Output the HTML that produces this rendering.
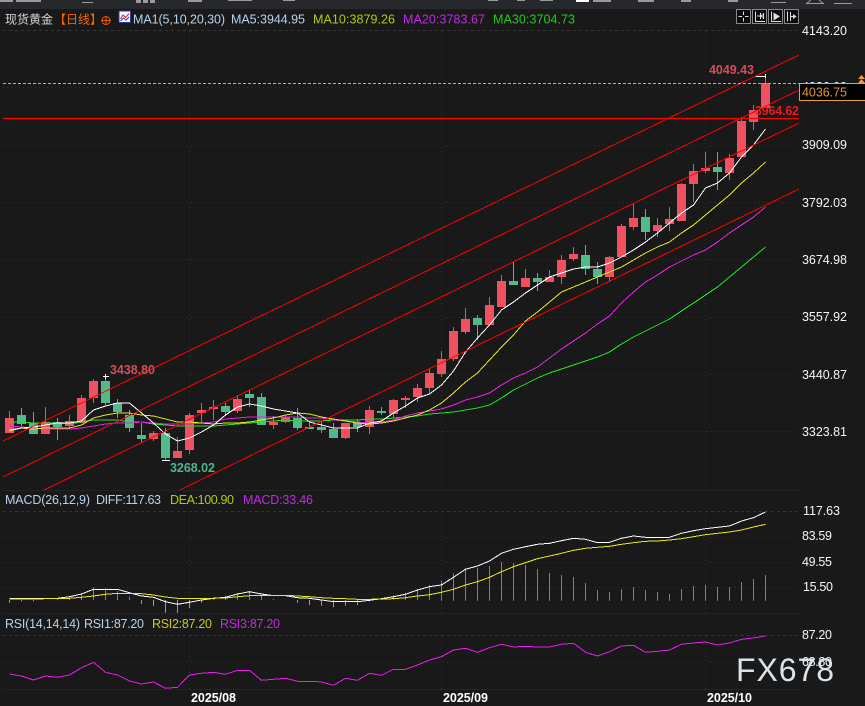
<!DOCTYPE html>
<html lang="zh">
<head>
<meta charset="utf-8">
<title>现货黄金</title>
<style>
html,body{margin:0;padding:0;background:#191919;width:865px;height:706px;overflow:hidden}
svg{display:block;font-family:"Liberation Sans","Noto Sans CJK SC",sans-serif}
text{font-size:12.5px}
.ax{fill:#f2f6fb}
.b{font-weight:bold}
</style>
</head>
<body>
<svg width="865" height="706" viewBox="0 0 865 706" xmlns="http://www.w3.org/2000/svg">
<rect width="865" height="706" fill="#191919"/>

<!-- top strip -->
<rect width="865" height="9" fill="#26282c"/>
<g fill="#9a9a9a">
<rect x="0" y="0" width="13" height="2"/><rect x="16" y="0" width="25" height="2"/>
<rect x="136" y="0" width="5" height="3"/><rect x="143" y="0" width="5" height="3"/><rect x="150" y="0" width="5" height="3"/>
<rect x="82" y="2" width="11" height="1"/><rect x="188" y="0" width="14" height="2"/><rect x="228" y="0" width="24" height="1"/><rect x="283" y="0" width="12" height="1"/>
<rect x="488" y="0" width="10" height="1"/><rect x="517" y="0" width="8" height="1"/><rect x="540" y="0" width="13" height="1"/>
<rect x="593" y="0" width="18" height="2"/><rect x="638" y="0" width="16" height="2"/><rect x="681" y="0" width="10" height="2"/><rect x="728" y="0" width="10" height="2"/>
<rect x="771" y="2" width="15" height="1"/><rect x="806" y="3" width="18" height="1"/>
<rect x="834" y="3" width="18" height="1"/>
</g>
<rect x="576" y="0" width="13" height="2" fill="#fff"/>
<path d="M806 4L811 0M824 4L819 0" stroke="#9a9a9a" fill="none"/>

<!-- grid -->
<g stroke="#363636" stroke-dasharray="3 3" fill="none">
<path d="M3 30.5H799M3 511.5H799M3 635.5H799"/>
</g>
<g stroke="#303030" stroke-dasharray="1 3" fill="none">
<path d="M3 87.5H799M3 145.5H799M3 202.5H799M3 259.5H799M3 317.5H799M3 374.5H799M3 431.5H799"/>
<path d="M3 537.5H799M3 562.5H799M3 587.5H799M3 662.5H799"/>
<path d="M189.5 31V490M441.5 31V490M705.5 31V490M189.5 512V613M441.5 512V613M705.5 512V613M189.5 636V689M441.5 636V689M705.5 636V689"/>
</g>
<path d="M3 490.5H799M3 613.5H799M3 689.5H799" stroke="#242424" fill="none"/>

<!-- candle wicks -->
<path stroke="#f0505f" fill="none" d="M9.5 411V433M45.5 407V434M69.5 415V428M81.5 395V423M93.5 379V403M153.5 431V441M177.5 437V458M189.5 413V454M201.5 403V423M213.5 400V420M237.5 395V413M273.5 416V429M285.5 415V423M345.5 423V439M369.5 406V434M393.5 399V418M405.5 396V408M417.5 384V402M429.5 369V393M441.5 351V377M453.5 327V361M465.5 308V334M489.5 297V325M501.5 275V307M525.5 269V287M549.5 270V282M561.5 255V284M573.5 247V261M609.5 256V282M621.5 224V257M633.5 204V230M657.5 218V237M669.5 207V231M681.5 183V221M693.5 164V202M705.5 152V173M729.5 154V180M741.5 117V157M753.5 105V130M765.5 77V108"/>
<path stroke="#52b98b" fill="none" d="M21.5 408V426M33.5 412V434M57.5 418V440M105.5 376V405M117.5 399V418M129.5 410V432M141.5 423V443M165.5 428V460M225.5 403V416M249.5 390V407M261.5 393V425M297.5 408V430M309.5 423V429M321.5 421V433M333.5 423V438M357.5 419V432M381.5 407V415M477.5 315V340M513.5 262V285M537.5 273V291M585.5 245V275M597.5 262V284M645.5 209V240M717.5 152V190"/>
<!-- candle bodies -->
<path fill="#f0505f" d="M5 418h9v15h-9zM41 422h9v12h-9zM65 421h9v5h-9zM77 398h9v25h-9zM89 381h9v17h-9zM149 433h9v6h-9zM173 451h9v7h-9zM185 415h9v35h-9zM197 410h9v3h-9zM209 407h9v2h-9zM233 399h9v12h-9zM269 422h9v3h-9zM281 417h9v5h-9zM341 423h9v15h-9zM365 410h9v17h-9zM389 400h9v14h-9zM401 398h9v2h-9zM413 388h9v9h-9zM425 373h9v15h-9zM437 359h9v15h-9zM449 331h9v28h-9zM461 319h9v13h-9zM485 305h9v20h-9zM497 281h9v26h-9zM521 278h9v9h-9zM545 277h9v5h-9zM557 260h9v17h-9zM569 254h9v5h-9zM605 257h9v20h-9zM617 226h9v31h-9zM629 218h9v9h-9zM653 225h9v6h-9zM665 219h9v5h-9zM677 184h9v37h-9zM689 171h9v13h-9zM701 168h9v3h-9zM725 158h9v15h-9zM737 121h9v36h-9zM749 110h9v12h-9zM761 83h9v25h-9z"/>
<path fill="#52b98b" d="M17 415h9v9h-9zM29 423h9v11h-9zM53 422h9v5h-9zM101 381h9v22h-9zM113 403h9v9h-9zM125 415h9v13h-9zM137 435h9v4h-9zM161 433h9v25h-9zM221 406h9v6h-9zM245 394h9v4h-9zM257 397h9v28h-9zM293 418h9v10h-9zM305 427h9v2h-9zM317 427h9v3h-9zM329 429h9v9h-9zM353 423h9v4h-9zM377 411h9v2h-9zM473 318h9v7h-9zM509 281h9v4h-9zM533 278h9v4h-9zM581 255h9v14h-9zM593 269h9v8h-9zM641 217h9v15h-9zM713 167h9v5h-9z"/>

<!-- high/low marks -->
<path stroke="#fff" fill="none" d="M103 376.5H109M105.5 374V379M162 460.5H170M755 76.5H766M765.5 74V78"/>

<!-- moving averages -->
<g fill="none" stroke-width="1" shape-rendering="crispEdges">
<polyline stroke="#22e022" points="9.5,422 21.5,422 33.5,423 45.5,423 57.5,423 69.5,424 81.5,422 93.5,420 105.5,420 117.5,420 129.5,422 141.5,422 153.5,424 165.5,425 177.5,426 189.5,426 201.5,426 213.5,426 225.5,425 237.5,424 249.5,423 261.5,422 273.5,421 285.5,420 297.5,421 309.5,421 321.5,421 333.5,420 345.5,420 357.5,420 369.5,419 381.5,419 393.5,418 405.5,417 417.5,416 429.5,414 441.5,413 453.5,412 465.5,410 477.5,408 489.5,405 501.5,398 513.5,390 525.5,384 537.5,378 549.5,373 561.5,369 573.5,365 585.5,361 597.5,357 609.5,352 621.5,344 633.5,337 645.5,331 657.5,325 669.5,319 681.5,311 693.5,303 705.5,295 717.5,287 729.5,277 741.5,267 753.5,257 765.5,247"/>
<polyline stroke="#e81fe8" points="9.5,426 21.5,427 33.5,428 45.5,429 57.5,429 69.5,429 81.5,428 93.5,426 105.5,424 117.5,423 129.5,423 141.5,422 153.5,423 165.5,424 177.5,424 189.5,424 201.5,423 213.5,422 225.5,419 237.5,418 249.5,417 261.5,417 273.5,417 285.5,417 297.5,417 309.5,418 321.5,418 333.5,420 345.5,421 357.5,422 369.5,423 381.5,422 393.5,420 405.5,416 417.5,413 429.5,411 441.5,409 453.5,405 465.5,400 477.5,397 489.5,393 501.5,385 513.5,378 525.5,373 537.5,367 549.5,358 561.5,349 573.5,341 585.5,333 597.5,324 609.5,316 621.5,303 633.5,292 645.5,282 657.5,275 669.5,267 681.5,261 693.5,255 705.5,250 717.5,242 729.5,233 741.5,225 753.5,217 765.5,207"/>
<polyline stroke="#e8e820" points="9.5,431 21.5,428 33.5,429 45.5,428 57.5,428 69.5,428 81.5,425 93.5,418 105.5,415 117.5,413 129.5,413 141.5,415 153.5,416 165.5,419 177.5,422 189.5,422 201.5,423 213.5,424 225.5,423 237.5,423 249.5,422 261.5,420 273.5,418 285.5,415 297.5,413 309.5,414 321.5,417 333.5,419 345.5,421 357.5,423 369.5,424 381.5,423 393.5,421 405.5,418 417.5,415 429.5,410 441.5,403 453.5,393 465.5,382 477.5,373 489.5,360 501.5,347 513.5,335 525.5,321 537.5,312 549.5,302 561.5,292 573.5,287 585.5,282 597.5,277 609.5,272 621.5,267 633.5,260 645.5,253 657.5,247 669.5,242 681.5,233 693.5,225 705.5,215 717.5,205 729.5,195 741.5,183 753.5,173 765.5,162"/>
<polyline stroke="#ffffff" points="9.5,430 21.5,428 33.5,427 45.5,425 57.5,423 69.5,423 81.5,421 93.5,410 105.5,406 117.5,403 129.5,403 141.5,413 153.5,423 165.5,434 177.5,441 189.5,438 201.5,432 213.5,425 225.5,415 237.5,407 249.5,404 261.5,406 273.5,409 285.5,411 297.5,413 309.5,422 321.5,425 333.5,428 345.5,428 357.5,428 369.5,423 381.5,421 393.5,413 405.5,406 417.5,398 429.5,394 441.5,385 453.5,371 465.5,352 477.5,338 489.5,325 501.5,310 513.5,302 525.5,293 537.5,285 549.5,277 561.5,273 573.5,269 585.5,267 597.5,267 609.5,263 621.5,257 633.5,250 645.5,242 657.5,233 669.5,223 681.5,213 693.5,205 705.5,188 717.5,183 729.5,173 741.5,157 753.5,145 765.5,129"/>
</g>

<!-- channel + horizontal lines -->
<defs><clipPath id="c"><rect x="3" y="31" width="796" height="459"/></clipPath></defs>
<g clip-path="url(#c)" fill="none" stroke="#ff0000" stroke-width="1" shape-rendering="crispEdges">
<path d="M3 441L799 55"/>
<path d="M3 477L799 90"/>
<path d="M3 510L799 123"/>
<path d="M3 576L799 189"/>
</g>
<path d="M3 118.5H799" stroke="#ff0000" stroke-width="1.3" fill="none"/>
<path d="M3 83.5H799" stroke="#e8a64a" stroke-dasharray="3 2" fill="none"/>

<!-- extreme labels -->
<text class="b" x="709" y="74" fill="#d9485a" textLength="45">4049.43</text>
<text class="b" x="755" y="115" fill="#f01818" textLength="44">3964.62</text>
<text class="b" x="110" y="374" fill="#d9485a" textLength="45">3438.80</text>
<text class="b" x="170" y="472" fill="#4fb58a" textLength="45">3268.02</text>

<!-- MACD histogram -->
<path stroke="#6fb59a" fill="none" d="M9.5 600V602.7M21.5 600V601.3M33.5 600V601.3M141.5 600V604M153.5 600V606M165.5 600V612.7M177.5 600V612.7M189.5 600V608M201.5 600V602.7M297.5 600V602.7M309.5 600V605M321.5 600V605.7M333.5 600V607.3M345.5 600V605.7M357.5 600V605M369.5 600V601.3"/>
<path stroke="#f0505f" fill="none" d="M57.5 600V598.7M69.5 600V597.3M81.5 600V593.3M93.5 600V587.3M105.5 600V588M117.5 600V591.3M129.5 600V596.7M213.5 600V597.3M225.5 600V596M237.5 600V593.3M249.5 600V591.3M261.5 600V595.3M273.5 600V599M285.5 600V599.7M381.5 600V599.3M393.5 600V595.3M405.5 600V592.7M417.5 600V589.3M429.5 600V585M441.5 600.7V580.7M453.5 600.7V573.3M465.5 600.7V568.3M477.5 600.7V567.7M489.5 600.7V566M501.5 600.7V562M513.5 600.7V563M525.5 600.7V565M537.5 600.7V569M549.5 600.7V573M561.5 600.7V575M573.5 600.7V577M585.5 600.7V583M597.5 600.7V590M609.5 600.7V592M621.5 600.7V589M633.5 600.7V587M645.5 600.7V590M657.5 600.7V592M669.5 600.7V594M681.5 600.7V589M693.5 600.7V586M705.5 600.7V585M717.5 600.7V587M729.5 600.7V587M741.5 600.7V582M753.5 600.7V579M765.5 600.7V575"/>

<!-- MACD lines -->
<g fill="none" stroke-width="1" shape-rendering="crispEdges">
<polyline stroke="#ffffff" points="9.5,598.3 21.5,598.3 33.5,598.3 45.5,598.3 57.5,598.3 69.5,596.7 81.5,594 93.5,589.3 105.5,589.3 117.5,589.3 129.5,592.7 141.5,596 153.5,597.3 165.5,601.7 177.5,604.3 189.5,602.3 201.5,600 213.5,598.3 225.5,597.3 237.5,594 249.5,591.7 261.5,594 273.5,595.7 285.5,595.7 297.5,597.7 309.5,598.3 321.5,600 333.5,601.7 345.5,601.7 357.5,601.7 369.5,600.3 381.5,598.7 393.5,596.7 405.5,594.3 417.5,590 429.5,586.7 441.5,585 453.5,577.3 465.5,569.3 477.5,566 489.5,561 501.5,553.3 513.5,549.3 525.5,546.7 537.5,544.3 549.5,543.3 561.5,540.7 573.5,538.3 585.5,539.3 597.5,542.7 609.5,542.3 621.5,538.3 633.5,536 645.5,537.3 657.5,537.3 669.5,537.3 681.5,533.3 693.5,530.7 705.5,528.7 717.5,527.3 729.5,526 741.5,521 753.5,517.7 765.5,512"/>
<polyline stroke="#e8e820" points="9.5,599 21.5,599 33.5,599 45.5,598.7 57.5,598.3 69.5,598.3 81.5,597.3 93.5,596 105.5,594.3 117.5,593.3 129.5,593.3 141.5,593.7 153.5,595 165.5,597 177.5,598.3 189.5,598.7 201.5,598.7 213.5,598.3 225.5,598 237.5,596.7 249.5,595.7 261.5,595.3 273.5,595.3 285.5,595.3 297.5,596 309.5,596.7 321.5,597.7 333.5,598.3 345.5,598.7 357.5,599.3 369.5,599.3 381.5,599 393.5,598.7 405.5,597.7 417.5,596 429.5,594.7 441.5,592.3 453.5,589.3 465.5,585 477.5,581.7 489.5,577.3 501.5,571.7 513.5,566.7 525.5,562.7 537.5,558.7 549.5,556 561.5,553.3 573.5,550.3 585.5,548.3 597.5,547.3 609.5,546.3 621.5,544.3 633.5,542.7 645.5,541.3 657.5,541 669.5,540 681.5,538.7 693.5,536.7 705.5,534.7 717.5,533.3 729.5,532 741.5,530 753.5,527 765.5,524.3"/>
<!-- RSI line -->
<polyline stroke="#e81fe8" points="9.5,674 21.5,676 33.5,680 45.5,676 57.5,677.3 69.5,675 81.5,667.7 93.5,662.3 105.5,672.3 117.5,675 129.5,681 141.5,684 153.5,682 165.5,688.3 177.5,687.3 189.5,675 201.5,673.3 213.5,672.3 225.5,674.3 237.5,670.3 249.5,670.3 261.5,680.3 273.5,679.3 285.5,678.3 297.5,681.3 309.5,681.3 321.5,682 333.5,685.3 345.5,678.3 357.5,680.3 369.5,673.3 381.5,675.3 393.5,669.3 405.5,669.3 417.5,665 429.5,660 441.5,656.7 453.5,650 465.5,648.3 477.5,652.3 489.5,647.7 501.5,644.3 513.5,647 525.5,646.3 537.5,647 549.5,647 561.5,644.3 573.5,643.3 585.5,652.3 597.5,656 609.5,651.7 621.5,646 633.5,645.3 645.5,652.3 657.5,651.3 669.5,650 681.5,644.3 693.5,643 705.5,642 717.5,645 729.5,643 741.5,639.3 753.5,638 765.5,636"/>
</g>

<!-- header -->
<text x="5" y="23.5" fill="#d8d8d8" style="font-size:12px">现货黄金</text>
<text x="54" y="23.5" fill="#f5660a" style="font-size:12px">【日线】</text>
<g fill="none" stroke="#e8590c"><circle cx="106" cy="20.5" r="4"/><path d="M101 20.5H111M106 16V25"/></g>
<rect x="119" y="11" width="11.5" height="11.5" fill="#f4f6ff" stroke="#2a3c9c"/>
<path d="M120.5 19L123 15L125.5 17.5L129 13.5" stroke="#e02020" fill="none"/>
<path d="M120.5 21L123.5 18L126 20L129 17" stroke="#2040c0" fill="none"/>
<text x="133" y="23.5" fill="#b6d3ee" textLength="92">MA1(5,10,20,30)</text>
<text x="231" y="23.5" fill="#b6d3ee" textLength="74">MA5:3944.95</text>
<text x="313" y="23.5" fill="#b4c814" textLength="82">MA10:3879.26</text>
<text x="403" y="23.5" fill="#c22ae6" textLength="82">MA20:3783.67</text>
<text x="493" y="23.5" fill="#22cc22" textLength="82">MA30:3704.73</text>

<!-- buttons -->
<g fill="#0c0c0c" stroke="#8a8a8a">
<rect x="736.5" y="9.5" width="14" height="14"/>
<rect x="752.5" y="9.5" width="14" height="14"/>
<rect x="768.5" y="9.5" width="14" height="14"/>
<rect x="784.5" y="9.5" width="14" height="14"/>
</g>
<g stroke="#e0e0e0" fill="none">
<path d="M743.5 11.5V15M743.5 18V21.5M738.5 16.5H742M745 16.5H748.5"/>
<path d="M755.5 11.5V21.5H765M760.5 13V19M763.5 13V19M757 16H760M761 16L763 14.5M761 16L763 17.5"/>
<path d="M771.5 11.5V21.5H781"/>
<path d="M787.5 11.5V21.5M790.5 12V21"/>
<path d="M791 16.5H796"/>
</g>
<path d="M773.5 12.5L780 16.5L773.5 20.5Z" fill="#e0e0e0"/>
<path d="M793 14L796.5 16.5L793 19Z" fill="#e0e0e0"/>

<!-- right axis -->
<text class="ax" x="802" y="35" textLength="45">4143.20</text>
<text class="ax" x="802" y="91" textLength="45">4026.00</text>
<text class="ax" x="802" y="149" textLength="45">3909.09</text>
<text class="ax" x="802" y="207" textLength="45">3792.03</text>
<text class="ax" x="802" y="264" textLength="45">3674.98</text>
<text class="ax" x="802" y="321" textLength="45">3557.92</text>
<text class="ax" x="802" y="379" textLength="45">3440.87</text>
<text class="ax" x="802" y="436" textLength="45">3323.81</text>

<rect x="799.5" y="83.5" width="66" height="17" fill="#000" stroke="#e8a040"/>
<text x="802" y="96.5" fill="#e0953a" textLength="45">4036.75</text>
<path d="M858 79L861.5 75L865 79ZM858 83L861.5 79L865 83Z" fill="#e8a040"/>

<text class="ax" x="803" y="515" textLength="37">117.63</text>
<text class="ax" x="802" y="540" textLength="30">83.59</text>
<text class="ax" x="802" y="566" textLength="30">49.55</text>
<text class="ax" x="803" y="591" textLength="30">15.50</text>
<text class="ax" x="802" y="639" textLength="30">87.20</text>
<text class="ax" x="802" y="666" textLength="30">68.80</text>

<!-- MACD / RSI titles -->
<text x="5" y="504" fill="#b6d3ee" textLength="85">MACD(26,12,9)</text>
<text x="96" y="504" fill="#b6d3ee" textLength="65">DIFF:117.63</text>
<text x="170" y="504" fill="#b4c814" textLength="64">DEA:100.90</text>
<text x="243" y="504" fill="#c22ae6" textLength="70">MACD:33.46</text>
<text x="5" y="628" fill="#b6d3ee" textLength="75">RSI(14,14,14)</text>
<text x="84" y="628" fill="#b6d3ee" textLength="60">RSI1:87.20</text>
<text x="152" y="628" fill="#c8c820" textLength="60">RSI2:87.20</text>
<text x="220" y="628" fill="#c22ae6" textLength="60">RSI3:87.20</text>

<!-- dates -->
<text class="b" x="191" y="702" fill="#fff" textLength="45">2025/08</text>
<text class="b" x="443" y="702" fill="#fff" textLength="45">2025/09</text>
<text class="b" x="707" y="702" fill="#fff" textLength="45">2025/10</text>

<!-- watermark -->
<text x="736" y="681" fill="#dbe4ee" style="font-size:32px" textLength="98">FX678</text>
</svg>
</body>
</html>
